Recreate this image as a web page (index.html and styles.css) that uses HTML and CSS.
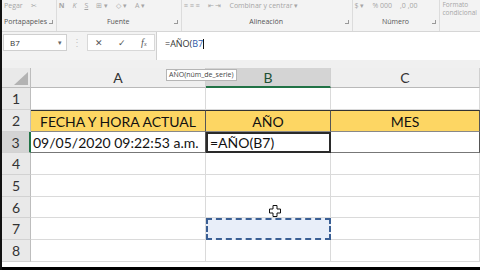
FILE: index.html
```html
<!DOCTYPE html>
<html lang="es">
<head>
    <meta charset="UTF-8">
    <meta name="viewport" content="width=device-width, initial-scale=1.0">
    <title>Libro1 - Excel</title>
    <link rel="stylesheet" href="styles.css">
</head>
<body>

    <div class="screen">
        <div class="edge"></div>
        <div class="app">

            <!-- cinta de opciones (recortada arriba) -->
            <div class="ribbon">
                <div class="group g-clip">
                    <div class="tools"><span class="faint">Pegar</span><span class="faint">✂</span></div>
                    <div class="label"><span></span><span>Portapapeles</span><span class="launch"></span></div>
                </div>
                <div class="group g-font">
                    <div class="tools"><b class="faint">N</b><i class="faint">K</i><u class="faint">S</u><span class="faint">⊞ ▾</span><span class="faint">◇ ▾</span><span class="faint">A ▾</span></div>
                    <div class="label"><span></span><span>Fuente</span><span class="launch"></span></div>
                </div>
                <div class="group g-align">
                    <div class="tools"><span class="faint">≡ ≡ ≡</span><span class="faint">⇤ ⇥</span><span class="faint">Combinar y centrar ▾</span></div>
                    <div class="label"><span></span><span>Alineación</span><span class="launch"></span></div>
                </div>
                <div class="group g-num">
                    <div class="tools"><span class="faint">$ ▾</span><span class="faint">% 000</span><span class="faint">,0 ,00</span></div>
                    <div class="label"><span></span><span>Número</span><span class="launch"></span></div>
                </div>
                <div class="group g-style">
                    <div class="tools tall"><span class="faint">Formato<br>condicional</span></div>
                </div>
            </div>

            <!-- barra de fórmulas -->
            <div class="fbar">
                <div class="namebox">B7<span class="arrow">▾</span></div>
                <div class="grip">⋮</div>
                <div class="fbtns">
                    <span>✕</span>
                    <span>✓</span>
                    <span class="fx">f<small>x</small></span>
                </div>
                <div class="finput">=AÑO(<span class="ref">B7</span><span class="caret"></span></div>
            </div>

            <!-- hoja -->
            <div class="sheet">
                <div class="grid">
                    <div class="corner"><span class="tri"></span></div>
                    <div class="colh">A</div>
                    <div class="colh active">B</div>
                    <div class="colh">C</div>

                    <div class="rowh">1</div><div class="cell"></div><div class="cell"></div><div class="cell"></div>

                    <div class="rowh">2</div>
                    <div class="cell head">FECHA Y HORA ACTUAL</div>
                    <div class="cell head">AÑO</div>
                    <div class="cell head">MES</div>

                    <div class="rowh active">3</div>
                    <div class="cell data">09/05/2020 09:22:53 a.m.</div>
                    <div class="cell data editing">=AÑO(B7)</div>
                    <div class="cell data"></div>

                    <div class="rowh">4</div><div class="cell"></div><div class="cell"></div><div class="cell"></div>
                    <div class="rowh">5</div><div class="cell"></div><div class="cell"></div><div class="cell"></div>
                    <div class="rowh">6</div><div class="cell"></div><div class="cell"></div><div class="cell"></div>
                    <div class="rowh">7</div><div class="cell"></div><div class="cell copy"></div><div class="cell"></div>
                    <div class="rowh">8</div><div class="cell"></div><div class="cell"></div><div class="cell"></div>
                </div>

                <div class="tip">AÑO(núm_de_serie)</div>

                <svg class="pointer" width="12" height="12" viewBox="0 0 12 12">
                    <path d="M4 0.5h4v3.5h3.5v4h-3.5v3.5h-4v-3.5h-3.5v-4h3.5z" fill="#fff" stroke="#111" stroke-width="1"/>
                </svg>
            </div>

            <div class="bottom"></div>
        </div>
    </div>

</body>
</html>
```

FILE: styles.css
```css
/* Hoja de Excel - función AÑO */
body {
    margin: 0;
    width: 480px;
    height: 270px;
    overflow: hidden;
    background-color: #000;
    font-family: "Open Sans", "Noto Sans", sans-serif;
}

.screen {
    display: flex;
    height: 270px;
}

.edge {
    width: 2px;
    background-color: #111;
}

.app {
    flex: 1;
    display: flex;
    flex-direction: column;
    background-color: #fff;
    position: relative;
    overflow: hidden;
}

/* ---- cinta ---- */
.ribbon {
    height: 31px;
    display: flex;
    background-color: #f3f3f3;
    border-bottom: 1px solid #d6d6d6;
}

.group {
    display: flex;
    flex-direction: column;
    justify-content: space-between;
    border-right: 1px solid #dcdcdc;
    padding: 1px 3px 5px 2px;
    box-sizing: border-box;
}

.g-clip { width: 56px; }
.g-font { width: 128px; }
.g-align { width: 175px; }
.g-num { width: 90px; }
.g-style { flex: 1; border-right: none; }

.tools {
    display: flex;
    gap: 8px;
    font-size: 7px;
    line-height: 9px;
    white-space: nowrap;
}

.tools.tall {
    line-height: 8px;
    font-size: 6.5px;
}

.faint {
    color: #a6a6a6;
}

.label {
    display: grid;
    grid-template-columns: 1fr auto 1fr;
    align-items: center;
    font-size: 7px;
    line-height: 9px;
    color: #555;
    white-space: nowrap;
}

.g-clip .label {
    grid-template-columns: 0 auto 1fr;
}

.launch {
    justify-self: end;
    width: 3px;
    height: 3px;
    border: 1px solid #999;
    border-top: none;
    border-left: none;
}

/* ---- barra de fórmulas ---- */
.fbar {
    height: 28px;
    display: flex;
    background-color: #f3f3f3;
}

.namebox {
    margin: 2px 0 9px 1px;
    width: 64px;
    box-sizing: border-box;
    background-color: #fff;
    border: 1px solid #cfcfcf;
    display: flex;
    justify-content: space-between;
    align-items: center;
    padding: 0 4px 0 6px;
    font-size: 8px;
    color: #333;
}

.namebox .arrow {
    font-size: 7px;
    color: #666;
}

.grip {
    width: 20px;
    text-align: center;
    color: #c4c4c4;
    font-size: 10px;
    line-height: 20px;
}

.fbtns {
    margin: 2px 0 9px 0;
    width: 68px;
    box-sizing: border-box;
    background-color: #fff;
    border: 1px solid #d8d8d8;
    display: flex;
    justify-content: space-around;
    align-items: center;
    font-size: 9px;
    color: #555;
}

.fbtns .fx {
    font-family: "Liberation Serif", serif;
    font-style: italic;
    font-size: 10px;
}

.fbtns .fx small {
    font-size: 6px;
}

.finput {
    flex: 1;
    margin-left: 1px;
    background-color: #fff;
    border-left: 1px solid #d0d0d0;
    padding: 5px 0 0 8px;
    font-size: 9px;
    color: #333;
}

.finput .ref {
    color: #2e5aa8;
}

.caret {
    display: inline-block;
    width: 1px;
    height: 10px;
    background-color: #111;
    vertical-align: -2px;
}

/* ---- hoja ---- */
.sheet {
    position: relative;
    padding-top: 8px;
    background-color: #f0f0f0;
}

.grid {
    display: grid;
    grid-template-columns: 29px 175px 125px 1fr;
    grid-template-rows: 20px 22px 22px 21px 22px 22px 21px 22px 22px;
    background-color: #fff;
    font-family: Lato, "Open Sans", sans-serif;
}

.grid > div {
    box-sizing: border-box;
}

.corner {
    background-color: #e9e9e9;
    border-right: 1px solid #bdbdbd;
    border-bottom: 1px solid #bdbdbd;
    position: relative;
}

.tri {
    position: absolute;
    right: 2px;
    bottom: 2px;
    width: 0;
    height: 0;
    border-left: 14px solid transparent;
    border-bottom: 13px solid #b3b3b3;
}

.colh {
    background-color: #efefef;
    border-right: 1px solid #d0d0d0;
    border-bottom: 1px solid #b9b9b9;
    display: flex;
    justify-content: center;
    align-items: center;
    font-size: 14px;
    color: #333;
}

.colh.active {
    background-color: #d4d4d4;
    border-bottom: 2px solid #217346;
    color: #1f5135;
}

.rowh {
    background-color: #e9e9e9;
    border-right: 1px solid #bdbdbd;
    border-bottom: 1px solid #d2d2d2;
    display: flex;
    justify-content: center;
    align-items: center;
    font-size: 14px;
    color: #333;
}

.rowh.active {
    background-color: #d4d4d4;
    border-right: 2px solid #217346;
}

.cell {
    border-right: 1px solid #dadada;
    border-bottom: 1px solid #dadada;
    font-size: 14px;
    color: #111;
    display: flex;
    align-items: center;
    white-space: nowrap;
}

.cell.head {
    background-color: #fdd663;
    justify-content: center;
    border-top: 1px solid #333;
    border-right-color: #555;
    border-bottom-color: #888;
}

.cell.data {
    padding-left: 2px;
    border-right-color: #555;
    border-bottom-color: #777;
}

.cell.editing {
    border: 2px solid #2a2a2a;
    padding-left: 2px;
}

.cell.copy {
    background-color: #e8eef9;
    border: 2px dashed #3a5f94;
}

.tip {
    position: absolute;
    left: 164px;
    top: 9px;
    padding: 0 2px;
    background-color: #fff;
    border: 1px solid #b5b5b5;
    font-size: 7px;
    line-height: 10px;
    color: #444;
    white-space: nowrap;
}

.pointer {
    position: absolute;
    left: 267px;
    top: 145px;
}

.bottom {
    flex: 1;
    background-color: #fff;
    border-bottom: 3px solid #000;
}
```
